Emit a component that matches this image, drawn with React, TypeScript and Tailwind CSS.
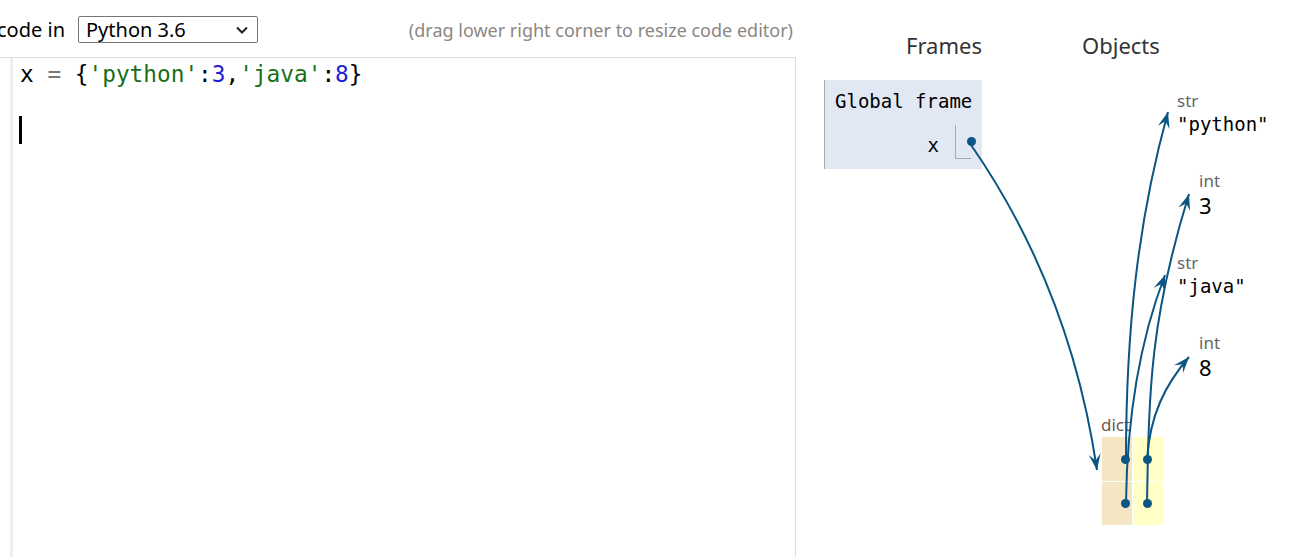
import React from "react";

const ARROW = "#0b5582";

function head(tx: number, ty: number, cx: number, cy: number) {
  const dx = tx - cx;
  const dy = ty - cy;
  const len = Math.hypot(dx, dy) || 1;
  const ux = dx / len;
  const uy = dy / len;
  const nx = -uy;
  const ny = ux;
  const L = 16;
  const W = 12;
  const pts = [
    [tx, ty],
    [tx - ux * L + nx * (W / 2), ty - uy * L + ny * (W / 2)],
    [tx - ux * L * 0.6, ty - uy * L * 0.6],
    [tx - ux * L - nx * (W / 2), ty - uy * L - ny * (W / 2)],
  ];
  return pts.map((p) => p.map((v) => v.toFixed(1)).join(",")).join(" ");
}

type Curve = { d: number[] };

const curves: Curve[] = [
  { d: [969, 142, 1020, 215, 1075, 320, 1097, 470] },
  { d: [1126, 459, 1126, 330, 1138, 220, 1168, 112] },
  { d: [1126, 503, 1127, 420, 1140, 340, 1165, 275] },
  { d: [1147, 503, 1149, 390, 1150, 320, 1189, 194] },
  { d: [1147, 459, 1150, 415, 1165, 385, 1189, 357] },
];

function Dot() {
  return <div className="w-[9px] h-[9px] rounded-full bg-[#0b5582]" />;
}

export default function App() {
  return (
    <div className="relative w-[1292px] h-[557px] overflow-hidden bg-white font-['Noto_Sans',sans-serif] text-black">
      <div className="flex">
        {/* left: code editor */}
        <div className="w-[796px] shrink-0 flex flex-col">
          <div className="h-[57px] pt-[16px]">
            <div className="flex items-center justify-between h-[27px] pr-[3px]">
              <div className="flex items-center">
                <span className="ml-[-3px] text-[20px] leading-none">code in</span>
                <div className="ml-[13px] w-[180px] h-[27px] border border-[#767676] rounded-[2px] pl-[7px] pr-[9px] flex items-center justify-between">
                  <span className="text-[20px] leading-none">Python 3.6</span>
                  <svg width="12" height="8" viewBox="0 0 12 8">
                    <path d="M1 1.5 L6 6.5 L11 1.5" fill="none" stroke="#222" strokeWidth="2" />
                  </svg>
                </div>
              </div>
              <span className="text-[18px] leading-none text-[#8c8782]">
                (drag lower right corner to resize code editor)
              </span>
            </div>
          </div>
          <div className="h-[520px] border-t border-r border-[#dddddd] flex">
            <div className="w-[10px] bg-white" />
            <div className="w-[3px] bg-[#eeeeee]" />
            <div className="pl-[7px] pt-[2px] font-['DejaVu_Sans_Mono',monospace] text-[22.75px] leading-[28px] whitespace-pre">
              <div>
                <span>x </span>
                <span className="text-[#777777]">=</span>
                <span> {"{"}</span>
                <span className="text-[#157015]">'python'</span>
                <span>:</span>
                <span className="text-[#1f1fd0]">3</span>
                <span>,</span>
                <span className="text-[#157015]">'java'</span>
                <span>:</span>
                <span className="text-[#1f1fd0]">8</span>
                <span>{"}"}</span>
              </div>
              <div className="h-[28px]" />
              <div className="h-[28px] flex items-center">
                <div className="ml-[-1px] w-[3px] h-[28px] bg-black" />
              </div>
            </div>
          </div>
        </div>

        {/* right: visualization */}
        <div className="flex-1 pt-[30px]">
          <div className="flex h-[30px] items-center text-[22px] leading-none text-[#333333]">
            <div className="w-[286px] pl-[110px]">Frames</div>
            <div>Objects</div>
          </div>
          <div className="flex mt-[20px]">
            <div className="ml-[28px] w-[158px] h-[89px] bg-[#e2e8f3] border-l border-[#aaaaaa] pl-[10px] pt-[10px]">
              <div className="font-['DejaVu_Sans_Mono',monospace] text-[19px] leading-[22px]">Global frame</div>
              <div className="mt-[13px] flex items-center justify-end pr-[11px]">
                <span className="font-['DejaVu_Sans_Mono',monospace] text-[19px] leading-none mr-[16px] mt-[6px]">x</span>
                <div className="w-[16px] h-[34px] border-l border-b border-[#aaaaaa] flex items-center justify-end">
                  <div className="mr-[-5px] mt-[-1px]">
                    <Dot />
                  </div>
                </div>
              </div>
            </div>
            <div className="ml-[118px] flex flex-col mt-[11px]">
              <div className="pl-[77px]">
                <div className="text-[17px] leading-[20px] text-[#666666]">str</div>
                <div className="mt-[2px] font-['DejaVu_Sans_Mono',monospace] text-[19px] leading-[22px]">"python"</div>
              </div>
              <div className="pl-[99px] mt-[36px]">
                <div className="text-[17px] leading-[20px] text-[#666666]">int</div>
                <div className="mt-[1px] text-[22px] leading-[26px]">3</div>
              </div>
              <div className="pl-[77px] mt-[35px]">
                <div className="text-[17px] leading-[20px] text-[#666666]">str</div>
                <div className="mt-[2px] font-['DejaVu_Sans_Mono',monospace] text-[19px] leading-[22px]">"java"</div>
              </div>
              <div className="pl-[99px] mt-[36px]">
                <div className="text-[17px] leading-[20px] text-[#666666]">int</div>
                <div className="mt-[1px] text-[22px] leading-[26px]">8</div>
              </div>
              <div className="pl-[1px] mt-[35px]">
                <div className="text-[17px] leading-[20px] text-[#6e5a48]">dict</div>
                <div className="ml-[1px] mt-[2px] grid grid-cols-[30px_30px] grid-rows-[44px_43px] gap-[1px] w-[61px]">
                  <div className="bg-[#f5e6c3] flex items-center justify-end pr-[2px]">
                    <Dot />
                  </div>
                  <div className="bg-[#ffffc6] flex items-center pl-[10px]">
                    <Dot />
                  </div>
                  <div className="bg-[#f5e6c3] flex items-center justify-end pr-[2px]">
                    <Dot />
                  </div>
                  <div className="bg-[#ffffc6] flex items-center pl-[10px]">
                    <Dot />
                  </div>
                </div>
              </div>
            </div>
          </div>
        </div>
      </div>

      {/* arrows overlay */}
      <svg className="absolute inset-0 pointer-events-none" width="1292" height="557" viewBox="0 0 1292 557">
        {curves.map((c, i) => {
          const [x0, y0, x1, y1, x2, y2, x3, y3] = c.d;
          return (
            <g key={i}>
              <path
                d={`M${x0},${y0} C${x1},${y1} ${x2},${y2} ${x3},${y3}`}
                fill="none"
                stroke={ARROW}
                strokeWidth="2"
              />
              <polygon points={head(x3, y3, x2, y2)} fill={ARROW} />
            </g>
          );
        })}
      </svg>
    </div>
  );
}
